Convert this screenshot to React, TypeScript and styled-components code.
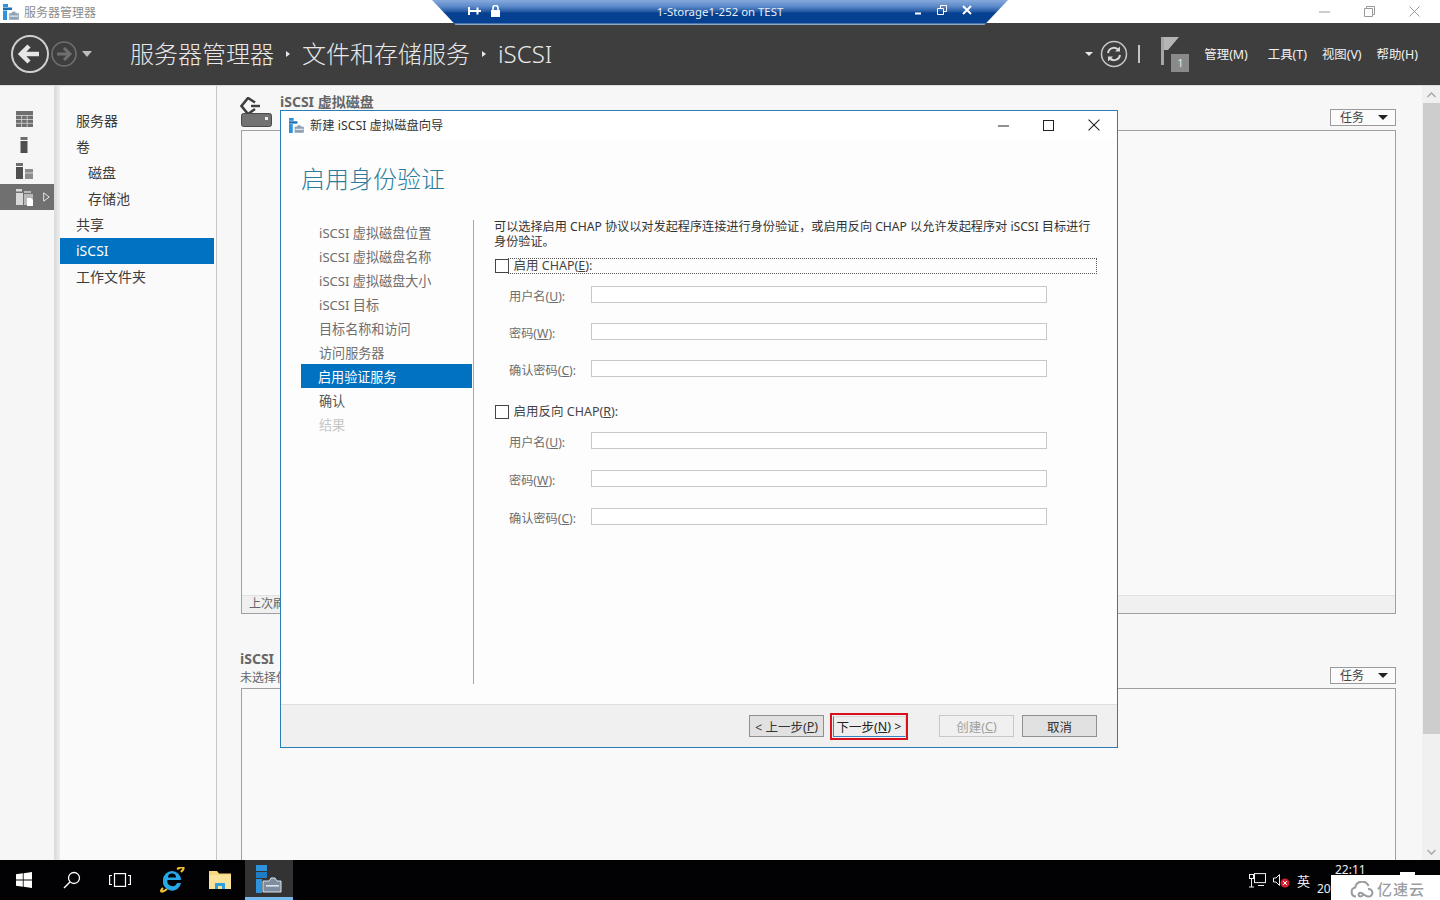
import React from 'react';
import styled, { createGlobalStyle } from 'styled-components';

const GlobalStyle = createGlobalStyle`
  html, body {
    margin: 0;
    padding: 0;
    background: #000;
  }
  body {
    font-family: "Noto Sans", "Noto Sans CJK SC", sans-serif;
    font-size: 13px;
  }
  * { box-sizing: border-box; }
`;

const Page = styled.div`
  position: relative;
  width: 1440px;
  height: 900px;
  overflow: hidden;
  display: flex;
  flex-direction: column;
  background: #f7f7f7;
`;

/* window title bar */
const TitleBar = styled.div`
  height: 23px;
  flex: none;
  background: #fff;
  display: flex;
  align-items: center;
  padding-left: 3px;
  color: #8c8c8c;
  font-size: 12px;
  gap: 5px;
`;

const WindowButtons = styled.div`
  margin-left: auto;
  display: flex;
  align-items: center;
  padding-right: 3px;
`;

const WindowButton = styled.div`
  width: 45px;
  height: 23px;
  display: flex;
  align-items: center;
  justify-content: center;
  color: ${props => props.color || '#9a9a9a'};
`;

/* remote desktop connection bar */
const RemoteBar = styled.div`
  position: absolute;
  top: 0;
  left: 432px;
  width: 576px;
  height: 25px;
  clip-path: polygon(0 0, 100% 0, 95.9% 100%, 4.1% 100%);
  background: linear-gradient(#86a9dc 0, #5f8ccb 6px, #2b5fa8 11px, #064191 13px, #064191 23px, #8fa9cc 24px);
  color: #fff;
  display: flex;
  align-items: center;
  font-size: 11.4px;
`;

const RemoteTitle = styled.div`
  position: absolute;
  left: 0;
  right: 0;
  top: 4px;
  text-align: center;
  color: #e8eef7;
`;

const RemoteIcons = styled.div`
  position: absolute;
  top: 5px;
  left: ${props => props.$left}px;
  display: flex;
  align-items: center;
  gap: ${props => props.$gap}px;
`;

/* dark header */
const Header = styled.div`
  height: 63px;
  flex: none;
  background: #3e3e3e;
  border-bottom: 1px solid #dcdcdc;
  display: flex;
  align-items: center;
  color: #ececec;
`;

const NavIcons = styled.div`
  width: 130px;
  padding-left: 10px;
  display: flex;
  align-items: center;
  flex: none;
`;

const Breadcrumb = styled.div`
  display: flex;
  align-items: center;
  font-size: 24px;
  font-weight: 300;
  line-height: 32px;
  color: #e8e8e8;
`;

const Crumb = styled.span`
  white-space: nowrap;
`;

const CrumbArrow = styled.span`
  width: 0;
  height: 0;
  margin: 0 12px 0 12px;
  border-left: 4px solid #e8e8e8;
  border-top: 3px solid transparent;
  border-bottom: 3px solid transparent;
`;

const HeaderTools = styled.div`
  margin-left: auto;
  display: flex;
  align-items: center;
  padding-right: 22px;
`;

const SmallCaret = styled.span`
  width: 0;
  height: 0;
  margin-right: 7px;
  border-top: 4px solid #e8e8e8;
  border-left: 4px solid transparent;
  border-right: 4px solid transparent;
`;

const HeaderRule = styled.span`
  width: 2px;
  height: 18px;
  background: #c4c4c4;
  margin: 0 21px 0 10px;
`;

const FlagBox = styled.div`
  position: relative;
  width: 28px;
  height: 34px;
  margin-right: 15px;
`;

const FlagBadge = styled.span`
  position: absolute;
  left: 10px;
  top: 17px;
  width: 18px;
  height: 18px;
  background: #8a8a8a;
  color: #e6e6e6;
  font-size: 11px;
  line-height: 18px;
  text-align: center;
`;

const MenuItem = styled.span`
  font-size: 12.4px;
  color: #f2f2f2;
  margin-left: ${props => props.$gap}px;
  white-space: nowrap;
`;

/* body */
const Main = styled.div`
  flex: 1;
  min-height: 0;
  display: flex;
`;

const Rail = styled.div`
  width: 54px;
  flex: none;
  padding-top: 20px;
  background: #f6f6f6;
`;

const RailItem = styled.div`
  position: relative;
  height: 26px;
  display: flex;
  align-items: center;
  padding-left: 16px;
  background: ${props => (props.$active ? '#707070' : 'transparent')};
`;

const RailArrow = styled.svg`
  position: absolute;
  right: 4px;
  top: 8px;
`;

const Gutter = styled.div`
  width: 6px;
  flex: none;
  background: linear-gradient(90deg, #d9d9d9, #eeeeee);
`;

const SideNav = styled.div`
  width: 157px;
  flex: none;
  padding-top: 22px;
  background: #fafafa;
  border-right: 1px solid #c6c6c6;
`;

const SideItem = styled.div`
  width: 154px;
  height: 26px;
  line-height: 25px;
  font-size: 14px;
  padding-left: ${props => (props.$child ? 28 : 16)}px;
  background: ${props => (props.$active ? '#0072c0' : 'transparent')};
  color: ${props => (props.$active ? '#fff' : '#3c3c3c')};
`;

const Content = styled.div`
  flex: 1;
  min-width: 0;
  padding: 0 26px 0 24px;
  background: #f7f7f7;
  overflow: hidden;
`;

const PanelHead = styled.div`
  height: ${props => props.$height}px;
  display: flex;
  align-items: flex-start;
  justify-content: space-between;
`;

const PanelTitleRow = styled.div`
  display: flex;
  align-items: flex-start;
  margin: 11px 0 0 -1px;
  gap: 7px;
`;

const PanelTitle = styled.div`
  font-size: 14px;
  font-weight: 700;
  color: #666;
  line-height: 18px;
  margin-top: ${props => props.$top}px;
`;

const SectionTitle = styled.div`
  margin-left: -1px;
`;

const PanelSub = styled.div`
  font-size: 12px;
  color: #666;
  line-height: 14px;
  margin-top: 3px;
`;

const TaskButton = styled.div`
  width: 66px;
  height: 17px;
  margin-top: ${props => props.$top}px;
  border: 1px solid #9a9a9a;
  background: #fbfbfb;
  font-size: 12px;
  color: #444;
  line-height: 15px;
  padding: 0 7px 0 9px;
  display: flex;
  align-items: center;
  justify-content: space-between;
`;

const TaskCaret = styled.span`
  width: 0;
  height: 0;
  border-top: 5px solid #222;
  border-left: 5px solid transparent;
  border-right: 5px solid transparent;
`;

const PanelBox = styled.div`
  height: ${props => props.$height}px;
  border: 1px solid #a0a0a0;
  background: #f9f9f9;
  display: flex;
  flex-direction: column;
  justify-content: flex-end;
`;

const PanelFoot = styled.div`
  height: 18px;
  background: #f0f0f0;
  border-top: 1px solid #e2e2e2;
  font-size: 12px;
  line-height: 16px;
  padding-left: 7px;
  color: #666;
`;

const PanelGap = styled.div`
  height: 39px;
`;

const ScrollBar = styled.div`
  width: 18px;
  flex: none;
  background: #f0f0f0;
  display: flex;
  flex-direction: column;
  align-items: center;
`;

const ScrollButton = styled.div`
  height: 17px;
  flex: none;
  display: flex;
  align-items: center;
  justify-content: center;
`;

const ScrollThumb = styled.div`
  width: 17px;
  height: 631px;
  background: #cdcdcd;
`;

const ScrollSpace = styled.div`
  flex: 1;
`;

/* taskbar */
const Taskbar = styled.div`
  position: relative;
  height: 40px;
  flex: none;
  background: #020204;
  display: flex;
  align-items: center;
`;

const TaskIcon = styled.div`
  width: 48px;
  height: 40px;
  flex: none;
  display: flex;
  align-items: center;
  justify-content: center;
  background: ${props => (props.$active ? '#333' : 'transparent')};
  border-bottom: ${props => (props.$active ? '3px solid #76b9ed' : 'none')};
  margin-left: ${props => props.$gap || 0}px;
`;

const Tray = styled.div`
  margin-left: auto;
  display: flex;
  align-items: center;
  gap: 7px;
  color: #eee;
  padding-right: 75px;
`;

const ImeLabel = styled.span`
  font-size: 13px;
`;

const Clock = styled.div`
  width: 48px;
  margin: -2px 0 0 0;
  color: #eee;
  font-size: 12px;
  line-height: 19px;
  position: relative;
  height: 40px;
`;

const ClockTime = styled.span`
  position: absolute;
  left: 18px;
  top: 1px;
`;

const ClockDate = styled.span`
  position: absolute;
  left: 0;
  top: 20px;
`;

/* watermark on top of the tray */
const Watermark = styled.div`
  position: absolute;
  right: 0;
  bottom: 0;
  width: 109px;
  height: 25px;
  background: #fff;
  display: flex;
  align-items: center;
  padding: 3px 0 0 19px;
  gap: 2px;
  color: #999da1;
  font-size: 15px;
  font-weight: 500;
  line-height: 18px;
  letter-spacing: 1px;
`;

const WatermarkNub = styled.div`
  position: absolute;
  right: 25px;
  bottom: 25px;
  width: 15px;
  height: 3px;
  background: #fff;
`;

/* wizard dialog */
const Dialog = styled.div`
  position: absolute;
  left: 280px;
  top: 110px;
  width: 838px;
  height: 638px;
  border: 1px solid #2a7db5;
  background: #fdfdfd;
  display: flex;
  flex-direction: column;
`;

const DialogTitleBar = styled.div`
  height: 29px;
  flex: none;
  background: #fff;
  display: flex;
  align-items: center;
  padding: 0 0 1px 8px;
  gap: 6px;
  font-size: 12.3px;
  color: #333;
`;

const DialogButtons = styled.div`
  margin-left: auto;
  display: flex;
  padding-right: 1px;
`;

const DialogHeading = styled.div`
  height: 80px;
  flex: none;
  padding: 20px 0 0 20px;
  font-size: 24px;
  line-height: 38px;
  font-weight: 300;
  color: #2a7d9c;
`;

const DialogBody = styled.div`
  flex: 1;
  min-height: 0;
  display: flex;
`;

const StepList = styled.div`
  width: 172px;
  margin-left: 20px;
  flex: none;
  height: 464px;
`;

const Step = styled.div`
  width: 171px;
  height: 24px;
  line-height: 26px;
  font-size: 13.1px;
  padding-left: ${props => (props.$active ? 17 : 18)}px;
  white-space: nowrap;
  background: ${props => (props.$active ? '#0072c0' : 'transparent')};
  color: ${props => {
    if (props.$active) return '#fff';
    if (props.$disabled) return '#c6c6c6';
    return props.$strong ? '#555' : '#6e6e6e';
  }};
`;

const StepDivider = styled.div`
  width: 1px;
  height: 464px;
  flex: none;
  background: #a8a8a8;
`;

const Pane = styled.div`
  flex: 1;
  min-width: 0;
  padding: 0 20px;
`;

const Description = styled.div`
  font-size: 12.15px;
  line-height: 15px;
  color: #333;
  margin-top: -1px;
`;

const CheckRow = styled.div`
  display: flex;
  align-items: center;
  height: 14px;
  font-size: 12.5px;
  color: #444;
  margin-top: ${props => props.$top}px;
  margin-left: 1px;
`;

const CheckBox = styled.span`
  width: 14px;
  height: 14px;
  flex: none;
  border: 1px solid #444;
  background: #fff;
`;

const CheckText = styled.span`
  flex: ${props => (props.$focus ? 1 : 'none')};
  height: 14px;
  line-height: 13px;
  padding-left: 4.5px;
  margin-right: ${props => (props.$focus ? 1 : 0)}px;
  outline: ${props => (props.$focus ? '1px dotted #555' : 'none')};
`;

const FieldGrid = styled.div`
  display: grid;
  row-gap: ${props => props.$gap}px;
  margin-top: ${props => props.$top}px;
`;

const FieldRow = styled.div`
  display: flex;
  align-items: center;
  height: 17px;
  padding-left: 15px;
`;

const FieldLabel = styled.label`
  width: 82px;
  flex: none;
  font-size: 12.2px;
  color: #6e6e6e;
  position: relative;
  top: 1px;
`;

const FieldInput = styled.div`
  width: 456px;
  height: 17px;
  border: 1px solid #c8c8c8;
  background: #fff;
`;

const DialogFooter = styled.div`
  height: 43px;
  flex: none;
  background: #f0f0f0;
  border-top: 1px solid #dfdfdf;
  display: flex;
  align-items: center;
  justify-content: flex-end;
  padding-right: 20px;
`;

const WizardButton = styled.div`
  width: 75px;
  height: 22px;
  display: flex;
  align-items: center;
  justify-content: center;
  font-size: 12.5px;
  white-space: nowrap;
  margin-left: ${props => props.$gap || 0}px;
  background: ${props => (props.$disabled ? '#f0f0f0' : '#e1e1e1')};
  border: 1px solid ${props => (props.$disabled ? '#c8c8c8' : '#8f8f8f')};
  color: ${props => (props.$disabled ? '#a0a0a0' : '#333')};
`;

const NextFrame = styled.div`
  margin-left: 6px;
  padding-top: 1px;
  width: 78px;
  height: 27px;
  border: 2px solid #d8111c;
  display: flex;
  align-items: center;
  justify-content: center;
`;

const NextButton = styled.div`
  width: 73px;
  height: 21px;
  display: flex;
  align-items: center;
  justify-content: center;
  font-size: 12.5px;
  color: #222;
  white-space: nowrap;
  background: #eeeeee;
  border: 1px solid #3a84c4;
  border-top-color: #d8d8d8;
  border-right-color: #d8d8d8;
`;

const ServerIcon = ({ size = 16 }: { size?: number }) => (
  <svg width={size} height={size} viewBox="0 0 16 16">
    <rect x="0" y="0" width="5" height="3" fill="#2f93dc" />
    <rect x="0" y="3.5" width="9" height="2.5" fill="#1c6fb4" />
    <rect x="0" y="6.5" width="4" height="9.5" fill="#2f93dc" />
    <path d="M6 9h2.5l1-1.6h2.5l1 1.6H16v7H6z" fill="#8fa3b5" stroke="#dfe6ec" strokeWidth="0.6" />
    <rect x="7" y="11.5" width="8" height="1.2" fill="#e8eef3" />
  </svg>
);

const BackIcon = () => (
  <svg width="40" height="40" viewBox="0 0 40 40">
    <circle cx="20" cy="20" r="18" fill="none" stroke="#cfcfcf" strokeWidth="2" />
    <path d="M29 20H12M19 12l-8 8 8 8" fill="none" stroke="#e6e6e6" strokeWidth="4.5" />
  </svg>
);

const ForwardIcon = () => (
  <svg width="28" height="28" viewBox="0 0 28 28">
    <circle cx="14" cy="14" r="12" fill="none" stroke="#6f6f6f" strokeWidth="1.6" />
    <path d="M7 14h12M14 8l6 6-6 6" fill="none" stroke="#6f6f6f" strokeWidth="3" />
  </svg>
);

const RefreshIcon = () => (
  <svg width="28" height="28" viewBox="0 0 28 28">
    <circle cx="14" cy="14" r="12.5" fill="none" stroke="#c8c8c8" strokeWidth="1.5" />
    <path d="M8 13a6 6 0 0 1 10.5-3M20 15a6 6 0 0 1-10.5 3" fill="none" stroke="#d8d8d8" strokeWidth="2" />
    <path d="M20 6.5v5h-5zM8 21.5v-5h5z" fill="#d8d8d8" />
  </svg>
);

const FlagIcon = () => (
  <svg width="18" height="28" viewBox="0 0 18 28">
    <rect x="0" y="0" width="3" height="28" fill="#a6a6a6" />
    <path d="M3 0h15L7 13H3z" fill="#b5b5b5" />
  </svg>
);

const GridIcon = () => (
  <svg width="17" height="16" viewBox="0 0 17 16">
    <rect width="17" height="16" fill="#6f6f6f" />
    <path d="M0 4.5h17M0 8.5h17M0 12.3h17M5.6 4v12M11.2 4v12" stroke="#d8d8d8" strokeWidth="0.8" />
  </svg>
);

const LocalIcon = () => (
  <svg width="17" height="16" viewBox="0 0 17 16">
    <rect x="4.5" y="0" width="7" height="3" fill="#6f6f6f" />
    <rect x="4.5" y="4" width="7" height="12" fill="#4f4f4f" />
  </svg>
);

const AllServersIcon = () => (
  <svg width="17" height="16" viewBox="0 0 17 16">
    <rect x="0" y="0" width="7" height="3" fill="#6f6f6f" />
    <rect x="0" y="4" width="7" height="12" fill="#4f4f4f" />
    <rect x="9" y="6" width="8" height="10" fill="#8c8c8c" />
    <rect x="9" y="9.5" width="8" height="1" fill="#d0d0d0" />
  </svg>
);

const FilesIcon = () => (
  <svg width="17" height="18" viewBox="0 0 17 18">
    <rect x="0" y="1" width="6" height="2.5" fill="#d8d8d8" />
    <rect x="0" y="5" width="7" height="12" fill="#d8d8d8" />
    <path d="M8 3h7v2H8zM8 6h9v11H8z" fill="#b8b8b8" />
    <path d="M11 10h4l2 2v6h-6z" fill="#fff" />
  </svg>
);

const DiskPanelIcon = () => (
  <svg width="33" height="31" viewBox="0 0 33 31">
    <path d="M15 5.5L8 1 1.5 9 8 17l7-5" fill="none" stroke="#3f3f3f" strokeWidth="2.6" />
    <path d="M11 9h9" stroke="#3f3f3f" strokeWidth="2.4" />
    <rect x="1.5" y="16.5" width="30" height="13" rx="2" fill="#727272" stroke="#4a4a4a" />
    <rect x="25" y="20" width="3" height="3" fill="#eee" />
  </svg>
);

const WindowsLogo = () => (
  <svg width="16" height="16" viewBox="0 0 16 16">
    <path d="M0 2.3l6.8-1v6.3H0zM7.6 1.2L16 0v7.6H7.6zM0 8.4h6.8v6.3l-6.8-1zM7.6 8.4H16V16l-8.4-1.2z" fill="#fff" />
  </svg>
);

const SearchGlyph = () => (
  <svg width="18" height="18" viewBox="0 0 18 18">
    <circle cx="11" cy="7" r="5.5" fill="none" stroke="#fff" strokeWidth="1.3" />
    <path d="M7 11l-6 6" stroke="#fff" strokeWidth="1.5" />
  </svg>
);

const TaskViewGlyph = () => (
  <svg width="22" height="14" viewBox="0 0 22 14">
    <rect x="5.5" y="0.6" width="11" height="12.8" fill="none" stroke="#fff" strokeWidth="1.2" />
    <path d="M3 2.5H.6v9H3M19 2.5h2.4v9H19" fill="none" stroke="#fff" strokeWidth="1.2" />
  </svg>
);

const IeLogo = () => (
  <svg width="26" height="26" viewBox="0 0 26 26">
    <path d="M4 21C0 25 3 26 8 22M22 5c5-5 2-6-4-3" fill="none" stroke="#f2c230" strokeWidth="2.2" />
    <path d="M4 13a9 9 0 0 1 18 0H8.5a5 5 0 0 0 9.5 3h4a9 9 0 0 1-18-3z" fill="#27a8e8" />
    <path d="M9 10.5h8a4 4 0 0 0-8 0z" fill="#020204" />
  </svg>
);

const FolderLogo = () => (
  <svg width="22" height="20" viewBox="0 0 22 20">
    <path d="M0 1h8l2 2.5h12V19H0z" fill="#f6d77c" />
    <rect x="0" y="5" width="22" height="14" fill="#f9e29a" />
    <path d="M6 19v-6h10v6h-3v-3H9v3z" fill="#2f9fe0" />
  </svg>
);

const ServerTaskLogo = () => (
  <svg width="26" height="28" viewBox="0 0 26 28">
    <rect x="0" y="0" width="11" height="6" fill="#2f93dc" />
    <rect x="0" y="7" width="11" height="6" fill="#1f7cc4" />
    <rect x="0" y="14" width="6" height="14" fill="#2f93dc" />
    <path d="M7 16h6l2-3h4l2 3h4v11H7z" fill="#7e8ea0" stroke="#dce4ea" />
    <rect x="10" y="20" width="13" height="1.6" fill="#dce4ea" />
  </svg>
);

const NetworkGlyph = () => (
  <svg width="17" height="15" viewBox="0 0 17 15">
    <rect x="5.5" y="0.6" width="11" height="9" fill="none" stroke="#eee" />
    <rect x="0.5" y="1.5" width="4" height="4" fill="#020204" stroke="#eee" />
    <path d="M2.5 5.5V14M0 14h5M9 12.5h6" stroke="#eee" />
  </svg>
);

const SpeakerGlyph = () => (
  <svg width="17" height="15" viewBox="0 0 17 15">
    <path d="M0.5 5h2.5L6.5 1.5v11L3 9H.5z" fill="none" stroke="#eee" />
    <circle cx="12" cy="10" r="4.5" fill="#d32030" />
    <path d="M10 8l4 4M14 8l-4 4" stroke="#fff" />
  </svg>
);

const CloudLogo = () => (
  <svg width="25" height="17" viewBox="0 0 25 17">
    <path
      d="M6 15.5a4.5 4.5 0 0 1-.8-8.9A7 7 0 0 1 18.6 5M18 8a3.8 3.8 0 1 1 0 7.5c-3 0-5-3.8-7.5-3.8a1.9 1.9 0 1 0 0 3.8c1.5 0 2-1 3-2"
      fill="none"
      stroke="#999da1"
      strokeWidth="2"
    />
  </svg>
);

const steps = [
  'iSCSI 虚拟磁盘位置',
  'iSCSI 虚拟磁盘名称',
  'iSCSI 虚拟磁盘大小',
  'iSCSI 目标',
  '目标名称和访问',
  '访问服务器',
];

const Credentials = ({ gap, top }: { gap: number; top: number }) => (
  <FieldGrid $gap={gap} $top={top}>
    <FieldRow>
      <FieldLabel>用户名(<u>U</u>):</FieldLabel>
      <FieldInput />
    </FieldRow>
    <FieldRow>
      <FieldLabel>密码(<u>W</u>):</FieldLabel>
      <FieldInput />
    </FieldRow>
    <FieldRow>
      <FieldLabel>确认密码(<u>C</u>):</FieldLabel>
      <FieldInput />
    </FieldRow>
  </FieldGrid>
);

const Cross = ({ color, size = 11 }: { color: string; size?: number }) => (
  <svg width={size} height={size} viewBox="0 0 11 11">
    <path d="M0.5 0.5l10 10M10.5 0.5l-10 10" stroke={color} fill="none" />
  </svg>
);

export default function App() {
  return (
    <Page>
      <GlobalStyle />
      <TitleBar>
        <ServerIcon />
        <span>服务器管理器</span>
        <WindowButtons>
          <WindowButton>
            <svg width="11" height="11" viewBox="0 0 11 11"><path d="M0 6h11" stroke="#9a9a9a" /></svg>
          </WindowButton>
          <WindowButton>
            <svg width="11" height="11" viewBox="0 0 11 11">
              <path d="M.5 2.5h8v8h-8zM2.5 2.5v-2h8v8h-2" fill="none" stroke="#9a9a9a" />
            </svg>
          </WindowButton>
          <WindowButton>
            <Cross color="#9a9a9a" />
          </WindowButton>
        </WindowButtons>
      </TitleBar>

      <Header>
        <NavIcons>
          <BackIcon />
          <ForwardIcon />
          <svg width="14" height="8" viewBox="0 0 14 8" style={{ marginLeft: 3 }}>
            <path d="M1 1h10L6 7z" fill="#bdbdbd" />
          </svg>
        </NavIcons>
        <Breadcrumb>
          <Crumb>服务器管理器</Crumb>
          <CrumbArrow />
          <Crumb>文件和存储服务</Crumb>
          <CrumbArrow />
          <Crumb>iSCSI</Crumb>
        </Breadcrumb>
        <HeaderTools>
          <SmallCaret />
          <RefreshIcon />
          <HeaderRule />
          <FlagBox>
            <FlagIcon />
            <FlagBadge>1</FlagBadge>
          </FlagBox>
          <MenuItem $gap={0}>管理(M)</MenuItem>
          <MenuItem $gap={20}>工具(T)</MenuItem>
          <MenuItem $gap={15}>视图(V)</MenuItem>
          <MenuItem $gap={15}>帮助(H)</MenuItem>
        </HeaderTools>
      </Header>

      <Main>
        <Rail>
          <RailItem><GridIcon /></RailItem>
          <RailItem><LocalIcon /></RailItem>
          <RailItem><AllServersIcon /></RailItem>
          <RailItem $active>
            <FilesIcon />
            <RailArrow width="7" height="10" viewBox="0 0 7 10">
              <path d="M.7.8l5.5 4.2-5.5 4.2z" fill="none" stroke="#e4e4e4" />
            </RailArrow>
          </RailItem>
        </Rail>
        <Gutter />
        <SideNav>
          <SideItem>服务器</SideItem>
          <SideItem>卷</SideItem>
          <SideItem $child>磁盘</SideItem>
          <SideItem $child>存储池</SideItem>
          <SideItem>共享</SideItem>
          <SideItem $active>iSCSI</SideItem>
          <SideItem>工作文件夹</SideItem>
        </SideNav>
        <Content>
          <PanelHead $height={44}>
            <PanelTitleRow>
              <DiskPanelIcon />
              <PanelTitle $top={-4}>iSCSI 虚拟磁盘</PanelTitle>
            </PanelTitleRow>
            <TaskButton $top={23}>
              任务
              <TaskCaret />
            </TaskButton>
          </PanelHead>
          <PanelBox $height={484}>
            <PanelFoot>上次刷</PanelFoot>
          </PanelBox>
          <PanelGap />
          <PanelHead $height={35}>
            <SectionTitle>
              <PanelTitle $top={-3}>iSCSI</PanelTitle>
              <PanelSub>未选择任何目标</PanelSub>
            </SectionTitle>
            <TaskButton $top={14}>
              任务
              <TaskCaret />
            </TaskButton>
          </PanelHead>
          <PanelBox $height={200} />
        </Content>
        <ScrollBar>
          <ScrollButton>
            <svg width="9" height="6" viewBox="0 0 9 6"><path d="M.5 5l4-4 4 4" fill="none" stroke="#a8a8a8" strokeWidth="1.5" /></svg>
          </ScrollButton>
          <ScrollThumb />
          <ScrollSpace />
          <ScrollButton>
            <svg width="9" height="6" viewBox="0 0 9 6"><path d="M.5 1l4 4 4-4" fill="none" stroke="#a8a8a8" strokeWidth="1.5" /></svg>
          </ScrollButton>
        </ScrollBar>
      </Main>

      <Taskbar>
        <TaskIcon><WindowsLogo /></TaskIcon>
        <TaskIcon><SearchGlyph /></TaskIcon>
        <TaskIcon><TaskViewGlyph /></TaskIcon>
        <TaskIcon $gap={4}><IeLogo /></TaskIcon>
        <TaskIcon><FolderLogo /></TaskIcon>
        <TaskIcon $active $gap={1}><ServerTaskLogo /></TaskIcon>
        <Tray>
          <NetworkGlyph />
          <SpeakerGlyph />
          <ImeLabel>英</ImeLabel>
          <Clock>
            <ClockTime>22:11</ClockTime>
            <ClockDate>20</ClockDate>
          </Clock>
        </Tray>
        <WatermarkNub />
        <Watermark>
          <CloudLogo />
          亿速云
        </Watermark>
      </Taskbar>

      <RemoteBar>
        <RemoteIcons $left={36} $gap={8}>
          <svg width="14" height="12" viewBox="0 0 14 12">
            <path d="M1 6h12M1 2v8M9.5 2.5v7" stroke="#fff" strokeWidth="2" fill="none" />
          </svg>
          <svg width="11" height="12" viewBox="0 0 11 12">
            <path d="M3 5V3a2.5 2.5 0 0 1 5 0v2" fill="none" stroke="#fff" strokeWidth="1.6" />
            <rect x="1" y="5" width="9" height="7" fill="#fff" />
          </svg>
        </RemoteIcons>
        <RemoteTitle>1-Storage1-252 on TEST</RemoteTitle>
        <RemoteIcons $left={482} $gap={15}>
          <svg width="8" height="10" viewBox="0 0 8 10"><path d="M1 8.5h6" stroke="#fff" strokeWidth="2" /></svg>
          <svg width="10" height="10" viewBox="0 0 10 10">
            <path d="M.5 3.5h6v6h-6zM3.5 3V.5h6v6H7" fill="none" stroke="#fff" />
          </svg>
          <svg width="10" height="10" viewBox="0 0 10 10"><path d="M1 1l8 8M9 1l-8 8" stroke="#fff" strokeWidth="2" /></svg>
        </RemoteIcons>
      </RemoteBar>

      <Dialog>
        <DialogTitleBar>
          <ServerIcon size={15} />
          <span>新建 iSCSI 虚拟磁盘向导</span>
          <DialogButtons>
            <WindowButton color="#222">
              <svg width="11" height="11" viewBox="0 0 11 11"><path d="M0 6h11" stroke="#222" /></svg>
            </WindowButton>
            <WindowButton>
              <svg width="11" height="11" viewBox="0 0 11 11"><rect x=".5" y=".5" width="10" height="10" fill="none" stroke="#222" /></svg>
            </WindowButton>
            <WindowButton>
              <Cross color="#222" size={12} />
            </WindowButton>
          </DialogButtons>
        </DialogTitleBar>
        <DialogHeading>启用身份验证</DialogHeading>
        <DialogBody>
          <StepList>
            {steps.map(step => (
              <Step key={step}>{step}</Step>
            ))}
            <Step $active>启用验证服务</Step>
            <Step $strong>确认</Step>
            <Step $disabled>结果</Step>
          </StepList>
          <StepDivider />
          <Pane>
            <Description>
              可以选择启用 CHAP 协议以对发起程序连接进行身份验证，或启用反向 CHAP 以允许发起程序对 iSCSI 目标进行身份验证。
            </Description>
            <CheckRow $top={10}>
              <CheckBox />
              <CheckText $focus>启用 CHAP(<u>E</u>):</CheckText>
            </CheckRow>
            <Credentials gap={20} top={13} />
            <CheckRow $top={28}>
              <CheckBox />
              <CheckText>启用反向 CHAP(<u>R</u>):</CheckText>
            </CheckRow>
            <Credentials gap={21} top={13} />
          </Pane>
        </DialogBody>
        <DialogFooter>
          <WizardButton>&lt; 上一步(<u>P</u>)</WizardButton>
          <NextFrame>
            <NextButton>下一步(<u>N</u>) &gt;</NextButton>
          </NextFrame>
          <WizardButton $disabled $gap={31}>创建(<u>C</u>)</WizardButton>
          <WizardButton $gap={8}>取消</WizardButton>
        </DialogFooter>
      </Dialog>
    </Page>
  );
}
